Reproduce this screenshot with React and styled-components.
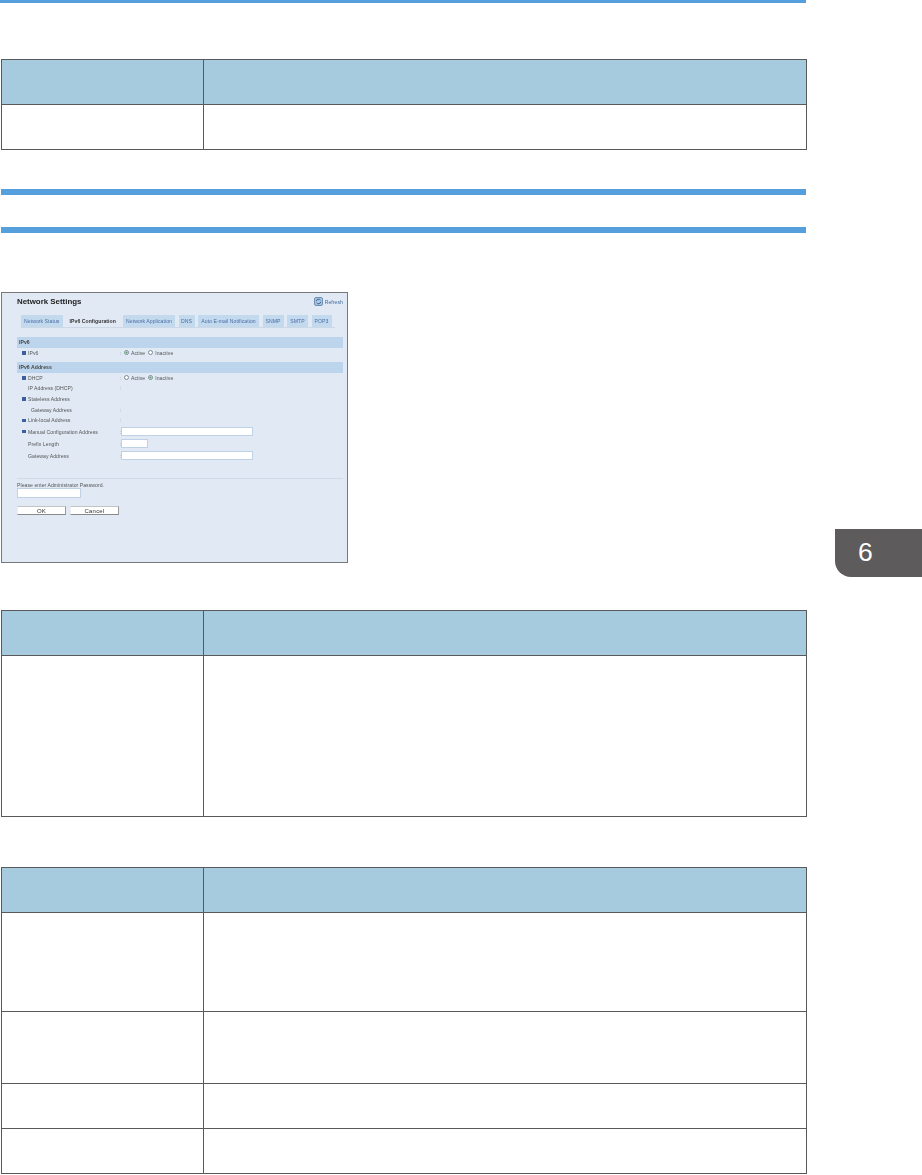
import styled, { createGlobalStyle } from "styled-components";

const GlobalStyle = createGlobalStyle`
  html, body {
    margin: 0;
    background: #fff;
    font-family: "Liberation Sans", Arial, sans-serif;
  }
`;

const tabs = [
  { name: "Network Status", w: 41.5 },
  { name: "IPv6 Configuration", w: 53.5, active: true },
  { name: "Network Application", w: 52 },
  { name: "DNS", w: 16 },
  { name: "Auto E-mail Notification", w: 61 },
  { name: "SNMP", w: 21 },
  { name: "SMTP", w: 21 },
  { name: "POP3", w: 20 },
];

export default function App() {
  return (
    <>
      <GlobalStyle />
      <Page>
        <TopRule />
        <DataTable $top={56} $rows={[45]} />
        <SectionRule $top={39} />
        <SectionRule $top={32} />

        <Panel>
          <TitleRow>
            <PanelTitle>Network Settings</PanelTitle>
            <Refresh>
              <svg width="9" height="9" viewBox="0 0 9 9">
                <rect x="0.5" y="0.5" width="8" height="8" rx="1.5" fill="#a9c4de" stroke="#6f8fb4" />
                <path d="M2.2 4.2A2.4 2.4 0 0 1 6.4 3M6.8 4.8A2.4 2.4 0 0 1 2.6 6" fill="none" stroke="#3f6a9c" />
              </svg>
              Refresh
            </Refresh>
          </TitleRow>

          <TabBar>
            {tabs.map((t) => (
              <Tab key={t.name} $w={t.w} $active={t.active}>{t.name}</Tab>
            ))}
          </TabBar>

          <SectionBar $gap={9}>IPv6</SectionBar>
          <Row>
            <Label $bullet>IPv6</Label>
            <Colon>:</Colon>
            <Radio $on />
            <Choice>Active</Choice>
            <Radio />
            <Choice>Inactive</Choice>
          </Row>

          <SectionBar $gap={4}>IPv6 Address</SectionBar>
          <FieldList>
            <Row>
              <Label $bullet>DHCP</Label>
              <Colon>:</Colon>
              <Radio />
              <Choice>Active</Choice>
              <Radio $on />
              <Choice>Inactive</Choice>
            </Row>
            <Row>
              <Label>IP Address (DHCP)</Label>
              <Colon>:</Colon>
            </Row>
            <Row>
              <Label $bullet>Stateless Address</Label>
            </Row>
            <Row>
              <Label $indent>Gateway Address</Label>
              <Colon>:</Colon>
            </Row>
            <Row>
              <Label $bullet>Link-local Address</Label>
              <Colon>:</Colon>
            </Row>
            <Row $tall>
              <Label $bullet>Manual Configuration Address</Label>
              <Colon>:</Colon>
              <Field $w={132} />
            </Row>
            <Row $tall>
              <Label>Prefix Length</Label>
              <Colon>:</Colon>
              <Field $w={27} />
            </Row>
            <Row $tall>
              <Label>Gateway Address</Label>
              <Colon>:</Colon>
              <Field $w={132} />
            </Row>
          </FieldList>

          <Divider />
          <PasswordLabel>Please enter Administrator Password.</PasswordLabel>
          <Field $w={64} $h={10} />
          <Buttons>
            <PanelButton>OK</PanelButton>
            <PanelButton>Cancel</PanelButton>
          </Buttons>
        </Panel>

        <DataTable $top={47} $rows={[161]} />
        <DataTable $top={50} $rows={[99, 72, 45, 45]} />

        <ChapterTab>6</ChapterTab>
      </Page>
    </>
  );
}

function DataTable({ $top, $rows }) {
  return (
    <Table $top={$top}>
      <colgroup>
        <col style={{ width: 202 }} />
        <col />
      </colgroup>
      <tbody>
        <HeadRow>
          <th />
          <th />
        </HeadRow>
        {$rows.map((h, i) => (
          <BodyRow key={i} $h={h}>
            <td />
            <td />
          </BodyRow>
        ))}
      </tbody>
    </Table>
  );
}

const Page = styled.div`
  position: relative;
  width: 922px;
  height: 1175px;
  overflow: hidden;
`;

const TopRule = styled.div`
  width: 806px;
  height: 3px;
  background: #55a0dc;
`;

const SectionRule = styled.div`
  width: 805px;
  height: 6px;
  margin: ${(p) => p.$top}px 0 0 1px;
  background: #55a0dc;
`;

const Table = styled.table`
  width: 806px;
  margin: ${(p) => p.$top}px 0 0 1px;
  table-layout: fixed;
  border-collapse: collapse;
  th, td {
    border: 1px solid #595959;
    padding: 0;
  }
`;

const HeadRow = styled.tr`
  height: 45px;
  background: #a6cbde;
`;

const BodyRow = styled.tr`
  height: ${(p) => p.$h}px;
`;

const Panel = styled.div`
  box-sizing: border-box;
  width: 347px;
  height: 271px;
  margin: 59px 0 0 1px;
  padding: 3px 4px 0 15px;
  border: 1px solid #77787a;
  background: #e0e9f4;
  color: #555;
  font-size: 5.1px;
  letter-spacing: 0.06px;
  line-height: 10px;
  filter: blur(0.4px);
`;

const TitleRow = styled.div`
  display: flex;
  justify-content: space-between;
  align-items: center;
  height: 11px;
`;

const PanelTitle = styled.div`
  font-size: 7.9px;
  font-weight: bold;
  letter-spacing: 0;
  color: #222;
`;

const Refresh = styled.div`
  display: flex;
  align-items: center;
  gap: 2px;
  color: #3f6a9c;
`;

const TabBar = styled.div`
  display: flex;
  gap: 3.5px;
  height: 12px;
  margin: 8px 8px 0 4px;
  border-bottom: 1px solid #ccd8e5;
`;

const Tab = styled.div`
  flex: none;
  width: ${(p) => p.$w}px;
  height: 12px;
  line-height: 12px;
  text-align: center;
  background: ${(p) => (p.$active ? "transparent" : "#c3d9ee")};
  color: ${(p) => (p.$active ? "#333" : "#4a6da6")};
  font-weight: ${(p) => (p.$active ? "bold" : "normal")};
  white-space: nowrap;
`;

const SectionBar = styled.div`
  height: 10.5px;
  margin-top: ${(p) => p.$gap}px;
  padding-left: 2px;
  line-height: 10.5px;
  background: #bcd5ec;
  color: #444;
  font-weight: bold;
`;

const FieldList = styled.div`
  display: flex;
  flex-direction: column;
`;

const Row = styled.div`
  display: flex;
  align-items: center;
  height: ${(p) => (p.$tall ? 12 : 10.6)}px;
`;

const Label = styled.div`
  position: relative;
  box-sizing: border-box;
  width: 103px;
  padding-left: ${(p) => (p.$indent ? 14 : 11)}px;
  &::before {
    content: "";
    display: ${(p) => (p.$bullet ? "block" : "none")};
    position: absolute;
    left: 5px;
    top: 3.3px;
    width: 3.5px;
    height: 3.5px;
    background: #3d5f9f;
  }
`;

const Colon = styled.span`
  width: 1px;
  color: #888;
`;

const Radio = styled.span`
  box-sizing: border-box;
  width: 5px;
  height: 5px;
  margin-left: 3px;
  border: 0.7px solid #7d8a99;
  border-radius: 50%;
  background: ${(p) => (p.$on ? "radial-gradient(circle, #4c9a5c 0 40%, #fff 55%)" : "#fff")};
`;

const Choice = styled.span`
  margin-left: 2px;
`;

const Field = styled.div`
  box-sizing: border-box;
  width: ${(p) => p.$w}px;
  height: ${(p) => p.$h || 9}px;
  background: #fff;
  border: 1px solid #bfd2e5;
`;

const Divider = styled.div`
  height: 1px;
  margin: 16px 0 0;
  background: #cfdae6;
`;

const PasswordLabel = styled.div`
  margin-top: 1px;
  height: 8px;
  line-height: 10px;
`;

const Buttons = styled.div`
  display: flex;
  gap: 4px;
  margin-top: 8px;
`;

const PanelButton = styled.div`
  box-sizing: border-box;
  width: 49px;
  height: 9px;
  line-height: 8px;
  text-align: center;
  background: #fff;
  border: 1px solid #c4c4c4;
  border-left-color: #eee;
  border-bottom-color: #8a8a8a;
  border-right-color: #999;
  color: #333;
  font-size: 6px;
  letter-spacing: 0.2px;
`;

const ChapterTab = styled.div`
  position: absolute;
  left: 835px;
  top: 529px;
  box-sizing: border-box;
  width: 87px;
  height: 48px;
  padding-left: 23px;
  border-bottom-left-radius: 16px;
  background: #5d5b5c;
  color: #fff;
  font-family: "Liberation Sans", Arial, sans-serif;
  font-size: 26.5px;
  line-height: 47px;
`;
